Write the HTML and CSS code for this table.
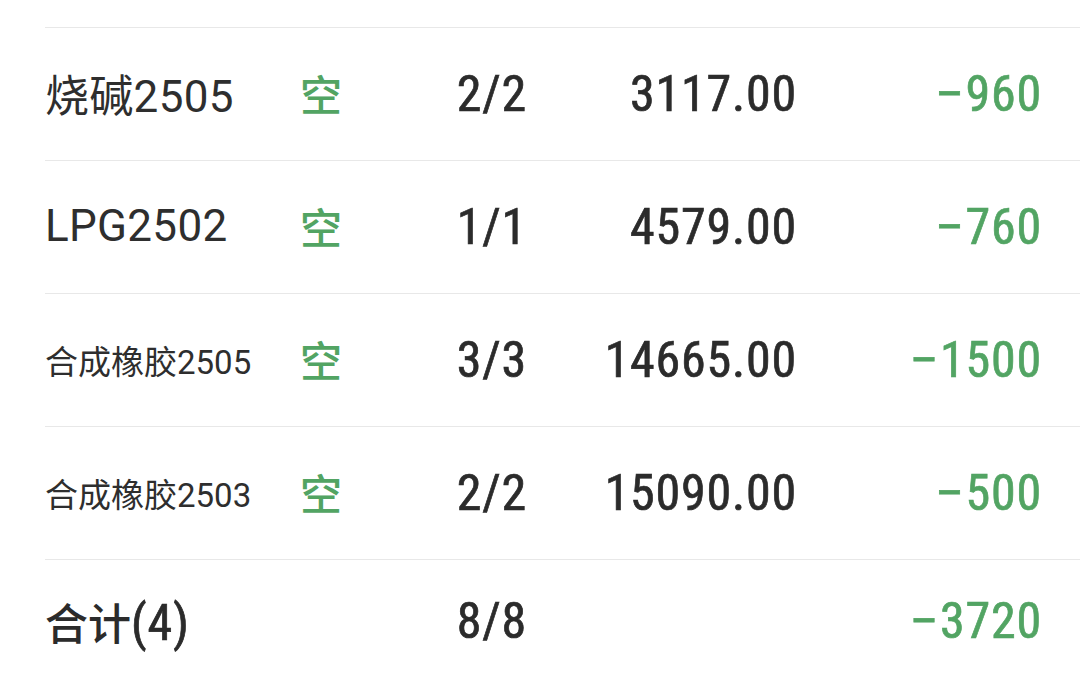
FILE: index.html
```html
<!DOCTYPE html>
<html lang="zh-CN">
<head>
<meta charset="utf-8">
<link rel="stylesheet" href="styles.css">
</head>
<body>
<div class="list">
  <div class="row">
    <div class="name">烧碱2505</div>
    <div class="side">空</div>
    <div class="num qty">2/2</div>
    <div class="num price">3117.00</div>
    <div class="num pnl"><span class="minus">−</span>960</div>
  </div>
  <div class="row">
    <div class="name">LPG2502</div>
    <div class="side">空</div>
    <div class="num qty">1/1</div>
    <div class="num price">4579.00</div>
    <div class="num pnl"><span class="minus">−</span>760</div>
  </div>
  <div class="row">
    <div class="name small">合成橡胶2505</div>
    <div class="side">空</div>
    <div class="num qty">3/3</div>
    <div class="num price">14665.00</div>
    <div class="num pnl"><span class="minus">−</span>1500</div>
  </div>
  <div class="row">
    <div class="name small">合成橡胶2503</div>
    <div class="side">空</div>
    <div class="num qty">2/2</div>
    <div class="num price">15090.00</div>
    <div class="num pnl"><span class="minus">−</span>500</div>
  </div>
  <div class="row total">
    <div class="total-label">合计<span class="num">(4)</span></div>
    <div class="side"></div>
    <div class="num qty">8/8</div>
    <div class="num price"></div>
    <div class="num pnl"><span class="minus">−</span>3720</div>
  </div>
</div>
</body>
</html>
```
FILE: styles.css
```css
html, body {
  margin: 0;
  padding: 0;
  background: #ffffff;
}
body {
  width: 1080px;
  height: 674px;
  overflow: hidden;
  font-family: Roboto, "Noto Sans CJK SC", sans-serif;
  color: #2b2b2b;
}
.list {
  padding-top: 27px;
  padding-left: 45px;
}
.row {
  display: grid;
  grid-template-columns: 255px 100px 127px 270px 245px 38px;
  align-items: center;
  height: 133px;
  box-sizing: border-box;
  border-top: 1px solid #e8e8e8;
}
.row.total {
  height: 122px;
}
.name {
  font-size: 44px;
  font-weight: 400;
  letter-spacing: 0.3px;
  color: #2e2e2e;
  white-space: nowrap;
  padding-bottom: 2px;
}
.name.small {
  font-size: 33px;
  letter-spacing: 0;
  padding-bottom: 0;
}
.total-label {
  font-family: "Noto Sans CJK SC", sans-serif;
  font-size: 43px;
  font-weight: 500;
  color: #2b2b2b;
  white-space: nowrap;
}
.side {
  font-family: "Noto Sans CJK SC", sans-serif;
  font-size: 42px;
  font-weight: 500;
  color: #52a463;
  padding-bottom: 4px;
}
.num {
  font-family: "Roboto Condensed", "DejaVu Sans Condensed", Roboto, sans-serif;
  font-size: 50px;
  font-weight: 400;
  letter-spacing: 0.8px;
  -webkit-text-stroke: 0.7px currentColor;
  white-space: nowrap;
}
.minus {
  font-family: Roboto, sans-serif;
  margin-right: 1px;
}
.qty, .price, .pnl {
  text-align: right;
  color: #2b2b2b;
}
.pnl {
  color: #52a463;
}
```
